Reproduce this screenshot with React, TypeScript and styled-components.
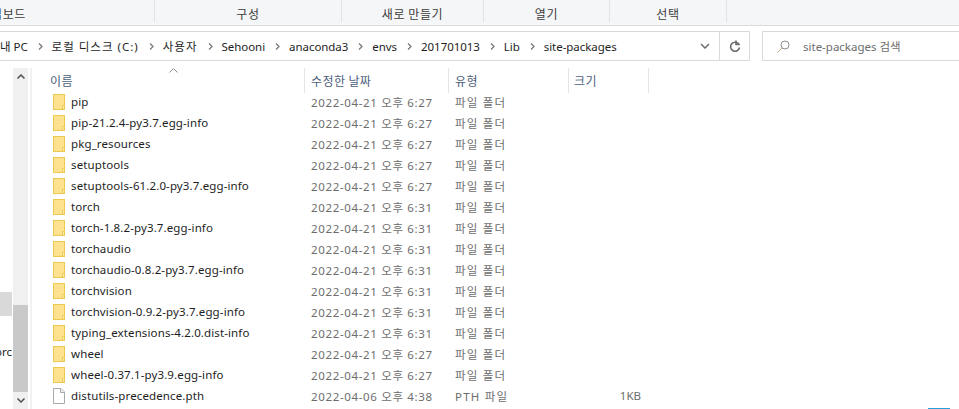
import React from 'react'
import styled, { createGlobalStyle } from 'styled-components'

const GlobalStyle = createGlobalStyle`
  html, body {
    margin: 0;
    background: #fff;
    overflow: hidden;
  }
  body {
    font-family: "Noto Sans", "Noto Sans CJK KR", sans-serif;
    font-size: 11.5px;
  }
`

const Window = styled.div`
  width: 959px;
  height: 409px;
  overflow: hidden;
  position: relative;
  background: #fff;
`

const Ribbon = styled.div`
  height: 25px;
  display: flex;
  background: #f5f6f7;
  border-bottom: 1px solid #dadbdc;
`

const RibbonGroup = styled.div<{ $w: number }>`
  width: ${p => p.$w}px;
  height: 22px;
  flex: none;
  box-sizing: border-box;
  border-right: 1px solid #e2e3e4;
  text-align: center;
  color: #3c3c3c;
  font-family: "Noto Sans CJK KR", sans-serif;
  font-size: 12px;
  letter-spacing: 0.6px;
  line-height: 28px;
  overflow: hidden;
  white-space: nowrap;
`

const ClippedGroup = styled(RibbonGroup)`
  display: flex;
  justify-content: flex-end;
  padding-right: 128px;
`

const NavBar = styled.div`
  height: 30px;
  margin-top: 5px;
  display: flex;
`

const AddressBox = styled.div`
  width: 720px;
  box-sizing: border-box;
  flex: none;
  border: 1px solid #d9d9d9;
  border-left: none;
  display: flex;
  align-items: center;
  overflow: hidden;
`

const Crumb = styled.span<{ $cjk: boolean }>`
  color: #1e1e1e;
  letter-spacing: ${p => (p.$cjk ? '1px' : '-0.05px')};
  white-space: nowrap;
`

const CrumbSep = styled.svg`
  width: 5px;
  height: 7px;
  margin: 0 9px 0 10px;
  flex: none;
`

const DropArrow = styled.svg`
  width: 10px;
  height: 6px;
  margin-left: auto;
  margin-right: 9px;
  flex: none;
`

const RefreshBox = styled.div`
  width: 31px;
  margin-left: -1px;
  box-sizing: border-box;
  flex: none;
  border: 1px solid #d9d9d9;
  display: flex;
  align-items: center;
  justify-content: center;
`

const SearchBox = styled.div`
  flex: 1;
  margin-left: 12px;
  border: 1px solid #d9d9d9;
  border-right: none;
  display: flex;
  align-items: center;
  padding-left: 14px;
  color: #6d6d6d;
  gap: 13px;
`

const Body = styled.div`
  display: flex;
  margin-top: 7px;
`

const SidePane = styled.div`
  width: 12px;
  height: 341px;
  padding-top: 224px;
  box-sizing: border-box;
  flex: none;
  overflow: hidden;
`

const SideHighlight = styled.div`
  height: 24px;
  background: #d9d9d9;
  margin-bottom: 28px;
`

const SideText = styled.div`
  color: #1e1e1e;
  height: 17px;
  display: flex;
  justify-content: flex-end;
  white-space: nowrap;
`

const ScrollBar = styled.div`
  width: 15px;
  height: 341px;
  margin-left: 1px;
  flex: none;
  background: #f0f0f0;
  display: flex;
  flex-direction: column;
`

const ScrollBtn = styled.div`
  height: 17px;
  flex: none;
  display: flex;
  align-items: center;
  justify-content: center;
`

const ScrollTrack = styled.div`
  flex: 1;
  display: flex;
  flex-direction: column;
  justify-content: flex-end;
`

const ScrollThumb = styled.div`
  height: 87px;
  background: #c9c9c9;
`

const Divider = styled.div`
  width: 2px;
  height: 341px;
  margin-left: 2px;
  flex: none;
  background: #f1f1f1;
`

const ListPane = styled.div`
  flex: 1;
  padding-left: 17px;
  position: relative;
`

const SortMark = styled.svg`
  position: absolute;
  left: 137px;
  top: 0;
  width: 9px;
  height: 5px;
`

const HeaderRow = styled.div`
  display: flex;
  height: 25px;
  margin-bottom: -2px;
`

const HeaderCell = styled.div<{ $w: number; $pad: number }>`
  width: ${p => p.$w}px;
  flex: none;
  box-sizing: border-box;
  height: 25px;
  border-right: 1px solid #e5e5e5;
  padding-left: ${p => p.$pad}px;
  color: #4c607a;
  font-family: "Noto Sans CJK KR", sans-serif;
  font-size: 12px;
  letter-spacing: 0.4px;
  line-height: 25px;
`

const FileRow = styled.div`
  display: flex;
  height: 21px;
  align-items: center;
`

const NameCell = styled.div`
  width: 255px;
  flex: none;
  display: flex;
  align-items: center;
  padding-left: 4px;
  box-sizing: border-box;
  color: #1e1e1e;
  letter-spacing: 0.12px;
  white-space: nowrap;
`

const IconSlot = styled.svg`
  width: 12px;
  height: 16px;
  flex: none;
  margin-right: 6px;
`

const DateCell = styled.div`
  width: 145px;
  flex: none;
  padding-left: 7px;
  box-sizing: border-box;
  color: #6d6d6d;
  letter-spacing: 0.65px;
  white-space: nowrap;
`

const TypeCell = styled.div`
  width: 119px;
  flex: none;
  padding-left: 6px;
  box-sizing: border-box;
  color: #6d6d6d;
  letter-spacing: 1.2px;
  white-space: nowrap;
`

const SizeCell = styled.div`
  width: 73px;
  flex: none;
  text-align: right;
  box-sizing: border-box;
  color: #6d6d6d;
`

const Accent = styled.div`
  position: absolute;
  right: 9px;
  bottom: 0;
  width: 22px;
  height: 1px;
  background: #26a0da;
`

const FolderIcon = () => (
  <IconSlot viewBox="0 0 12 16">
    <rect x="0.5" y="0.5" width="11" height="15" fill="#ffe28f" stroke="#eec94f" />
    <path d="M9.5 15.5V11.5H11.5" fill="#fff3c7" stroke="#eec94f" />
  </IconSlot>
)

const PageIcon = () => (
  <IconSlot viewBox="0 0 12 16">
    <path d="M0.5 0.5H8L11.5 4V15.5H0.5Z" fill="#fff" stroke="#a9a9a9" />
    <path d="M7.5 0.5V4.5H11.5" fill="#f2f2f2" stroke="#a9a9a9" />
  </IconSlot>
)

const crumbs = [
  { label: '내 PC', cjk: false },
  { label: '로컬 디스크 (C:)', cjk: true },
  { label: '사용자', cjk: true },
  { label: 'Sehooni', cjk: false },
  { label: 'anaconda3', cjk: false },
  { label: 'envs', cjk: false },
  { label: '201701013', cjk: false },
  { label: 'Lib', cjk: false },
  { label: 'site-packages', cjk: false },
]

const rows = [
  ['pip', '2022-04-21 오후 6:27'],
  ['pip-21.2.4-py3.7.egg-info', '2022-04-21 오후 6:27'],
  ['pkg_resources', '2022-04-21 오후 6:27'],
  ['setuptools', '2022-04-21 오후 6:27'],
  ['setuptools-61.2.0-py3.7.egg-info', '2022-04-21 오후 6:27'],
  ['torch', '2022-04-21 오후 6:31'],
  ['torch-1.8.2-py3.7.egg-info', '2022-04-21 오후 6:31'],
  ['torchaudio', '2022-04-21 오후 6:31'],
  ['torchaudio-0.8.2-py3.7.egg-info', '2022-04-21 오후 6:31'],
  ['torchvision', '2022-04-21 오후 6:31'],
  ['torchvision-0.9.2-py3.7.egg-info', '2022-04-21 오후 6:31'],
  ['typing_extensions-4.2.0.dist-info', '2022-04-21 오후 6:31'],
  ['wheel', '2022-04-21 오후 6:27'],
  ['wheel-0.37.1-py3.9.egg-info', '2022-04-21 오후 6:27'],
]

export default function App() {
  return (
    <Window>
      <GlobalStyle />
      <Ribbon>
        <ClippedGroup $w={155}>클립보드</ClippedGroup>
        <RibbonGroup $w={187}>구성</RibbonGroup>
        <RibbonGroup $w={142}>새로 만들기</RibbonGroup>
        <RibbonGroup $w={126}>열기</RibbonGroup>
        <RibbonGroup $w={117}>선택</RibbonGroup>
      </Ribbon>
      <NavBar>
        <AddressBox>
          {crumbs.map((c, i) => (
            <React.Fragment key={c.label}>
              <Crumb $cjk={c.cjk}>{c.label}</Crumb>
              {i < crumbs.length - 1 && (
                <CrumbSep viewBox="0 0 5 7">
                  <path d="M1 0.5L4 3.5L1 6.5" fill="none" stroke="#7a7a7a" strokeWidth="1.3" />
                </CrumbSep>
              )}
            </React.Fragment>
          ))}
          <DropArrow viewBox="0 0 10 6">
            <path d="M1 1L5 5L9 1" fill="none" stroke="#6d6d6d" strokeWidth="1.5" />
          </DropArrow>
        </AddressBox>
        <RefreshBox>
          <svg width="12" height="13" viewBox="0 0 12 13">
            <path d="M10 4.5A4.5 4.5 0 1 0 10.5 7.5" fill="none" stroke="#6d6d6d" strokeWidth="1.6" />
            <path d="M7 0.5L7 4.5L10.8 4.5" fill="none" stroke="#6d6d6d" strokeWidth="1.6" />
          </svg>
        </RefreshBox>
        <SearchBox>
          <svg width="13" height="13" viewBox="0 0 13 13">
            <circle cx="8" cy="5" r="4" fill="none" stroke="#8c8c8c" />
            <path d="M5 8L0.5 12.5" stroke="#c2a98c" />
          </svg>
          <span>site-packages 검색</span>
        </SearchBox>
      </NavBar>
      <Body>
        <SidePane>
          <SideHighlight />
          <SideText>orc</SideText>
        </SidePane>
        <ScrollBar>
          <ScrollBtn>
            <svg width="8" height="5" viewBox="0 0 8 5">
              <path d="M0.5 4.5L4 1L7.5 4.5" fill="none" stroke="#505050" strokeWidth="1.5" />
            </svg>
          </ScrollBtn>
          <ScrollTrack>
            <ScrollThumb />
          </ScrollTrack>
          <ScrollBtn>
            <svg width="8" height="5" viewBox="0 0 8 5">
              <path d="M0.5 0.5L4 4L7.5 0.5" fill="none" stroke="#505050" strokeWidth="1.5" />
            </svg>
          </ScrollBtn>
        </ScrollBar>
        <Divider />
        <ListPane>
          <SortMark viewBox="0 0 9 5">
            <path d="M0.5 4.5L4.5 0.5L8.5 4.5" fill="none" stroke="#8a8a8a" />
          </SortMark>
          <HeaderRow>
            <HeaderCell $w={256} $pad={1}>이름</HeaderCell>
            <HeaderCell $w={144} $pad={6}>수정한 날짜</HeaderCell>
            <HeaderCell $w={120} $pad={6}>유형</HeaderCell>
            <HeaderCell $w={80} $pad={5}>크기</HeaderCell>
          </HeaderRow>
          {rows.map(([name, date]) => (
            <FileRow key={name}>
              <NameCell>
                <FolderIcon />
                {name}
              </NameCell>
              <DateCell>{date}</DateCell>
              <TypeCell>파일 폴더</TypeCell>
            </FileRow>
          ))}
          <FileRow>
            <NameCell>
              <PageIcon />
              distutils-precedence.pth
            </NameCell>
            <DateCell>2022-04-06 오후 4:38</DateCell>
            <TypeCell>PTH 파일</TypeCell>
            <SizeCell>1KB</SizeCell>
          </FileRow>
        </ListPane>
      </Body>
      <Accent />
    </Window>
  )
}
